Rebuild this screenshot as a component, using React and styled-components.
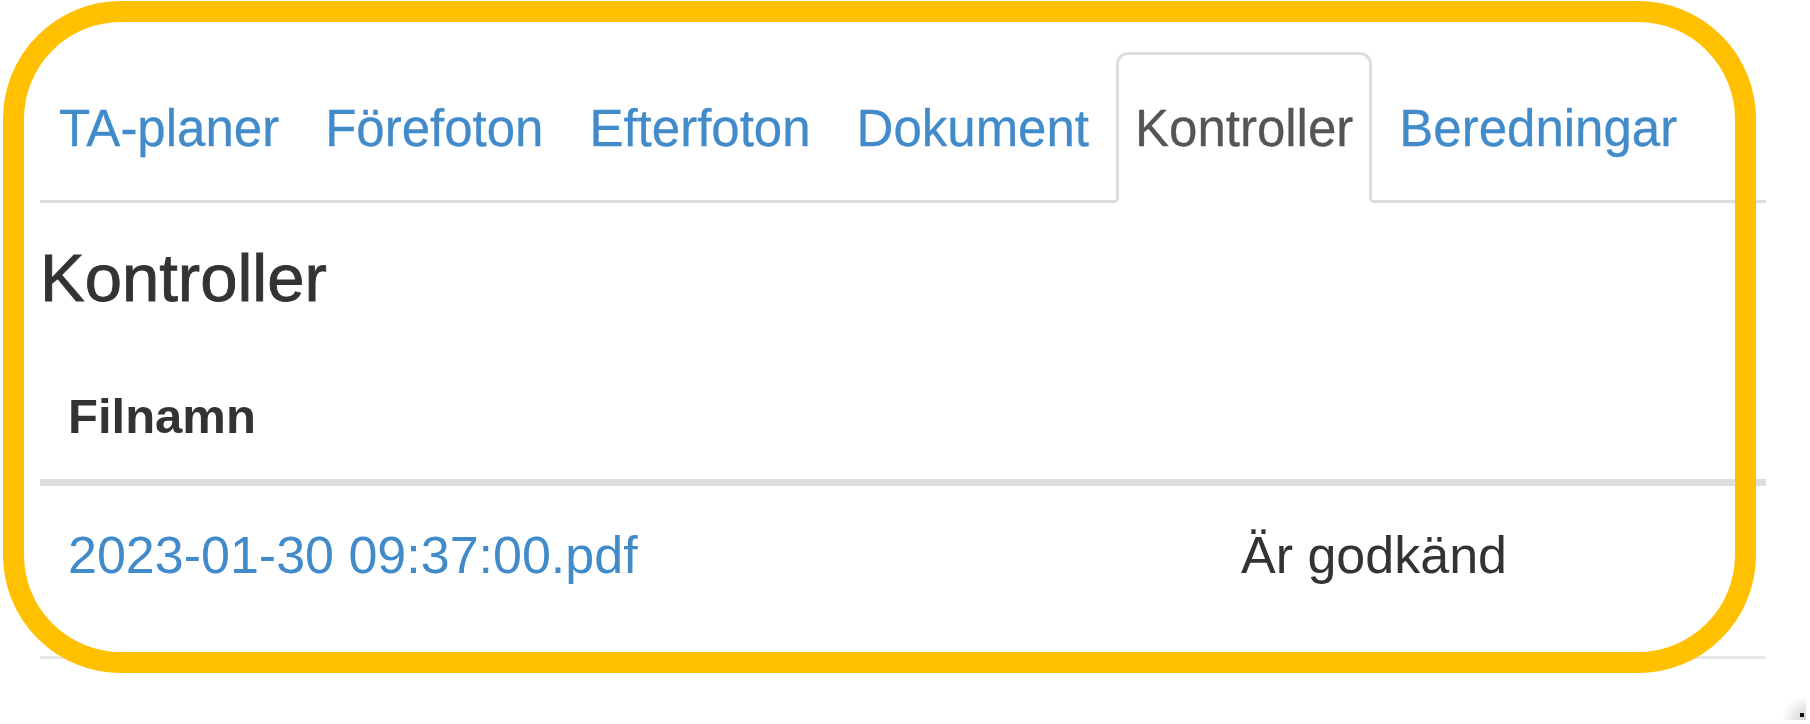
import React from 'react';
import styled, { createGlobalStyle } from 'styled-components';

const Global = createGlobalStyle`
  html, body { margin: 0; padding: 0; background: #fff; }
  body { font-family: "Liberation Sans", Arial, Helvetica, sans-serif; }
  * { box-sizing: border-box; }
`;

const Page = styled.div`
  position: relative;
  width: 1810px;
  height: 724px;
  overflow: hidden;
  background: #fff;
`;

const Content = styled.div`
  width: 1726px;
  margin-left: 40px;
  padding-top: 52px;
`;

const Tabs = styled.ul`
  display: flex;
  list-style: none;
  margin: 0;
  padding: 0;
  border-bottom: 3px solid #ddd;
`;

const Tab = styled.li`
  margin: 0 8px -3px 0;
  padding: 38px 16px 36px;
  border: 3px solid ${p => (p.$active ? '#ddd' : 'transparent')};
  border-bottom-color: ${p => (p.$active ? '#fff' : 'transparent')};
  border-radius: 12px 12px 0 0;
  background: ${p => (p.$active ? '#fff' : 'transparent')};
  font-size: 51px;
  line-height: 71px;
  color: ${p => (p.$active ? '#555' : '#428bca')};
  -webkit-text-stroke: 0.3px currentColor;
  white-space: nowrap;
`;

const Heading = styled.h3`
  margin: 38px 0 39px;
  font-size: 67px;
  line-height: 73px;
  font-weight: 500;
  color: #333;
  -webkit-text-stroke: 0.9px #333;
`;

const Table = styled.div`
  display: grid;
  grid-template-columns: 1173px 1fr;
`;

const HeadCell = styled.div`
  padding: 28px;
  font-size: 49px;
  line-height: 70px;
  font-weight: 700;
  color: #333;
  border-bottom: 7px solid #ddd;
`;

const Cell = styled.div`
  padding: 32px 28px 64px;
  font-size: 52px;
  line-height: 74px;
  color: ${p => (p.$link ? '#428bca' : '#333')};
  border-bottom: 3px solid #e8e8e8;
  white-space: nowrap;
`;

const Highlight = styled.div`
  position: absolute;
  left: 3px;
  top: 1px;
  width: 1753px;
  height: 672px;
  border: 21px solid #ffc000;
  border-radius: 118px;
  pointer-events: none;
`;

const CornerMark = styled.div`
  position: absolute;
  left: 1782px;
  top: 694px;
  width: 24px;
  height: 26px;
  background: radial-gradient(circle at 100% 100%, rgba(0,0,0,0.18) 0, rgba(0,0,0,0) 70%);
  &::after {
    content: '';
    position: absolute;
    right: 2px;
    bottom: 3px;
    width: 4px;
    height: 4px;
    background: #111;
  }
`;

const tabs = ['TA-planer', 'Förefoton', 'Efterfoton', 'Dokument', 'Kontroller', 'Beredningar'];

export default function App() {
  return (
    <Page>
      <Global />
      <Content>
        <Tabs>
          {tabs.map(t => (
            <Tab key={t} $active={t === 'Kontroller'}>{t}</Tab>
          ))}
        </Tabs>
        <Heading>Kontroller</Heading>
        <Table>
          <HeadCell>Filnamn</HeadCell>
          <HeadCell />
          <Cell $link>2023-01-30 09:37:00.pdf</Cell>
          <Cell>Är godkänd</Cell>
        </Table>
      </Content>
      <Highlight />
      <CornerMark />
    </Page>
  );
}
